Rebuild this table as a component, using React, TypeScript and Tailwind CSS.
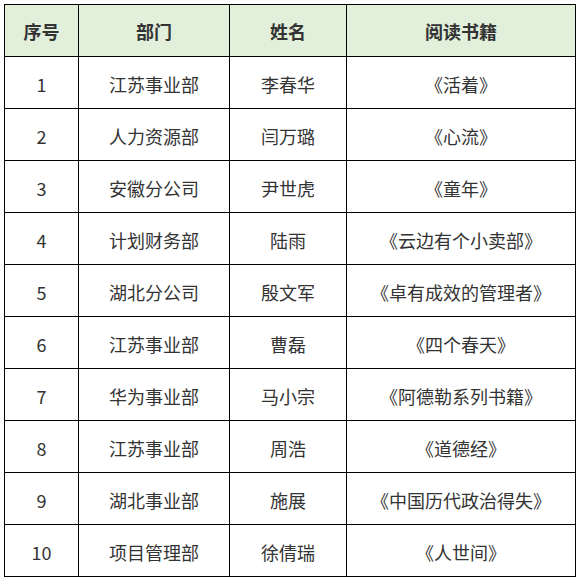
const rows = [
  ['1', '江苏事业部', '李春华', '《活着》'],
  ['2', '人力资源部', '闫万璐', '《心流》'],
  ['3', '安徽分公司', '尹世虎', '《童年》'],
  ['4', '计划财务部', '陆雨', '《云边有个小卖部》'],
  ['5', '湖北分公司', '殷文军', '《卓有成效的管理者》'],
  ['6', '江苏事业部', '曹磊', '《四个春天》'],
  ['7', '华为事业部', '马小宗', '《阿德勒系列书籍》'],
  ['8', '江苏事业部', '周浩', '《道德经》'],
  ['9', '湖北事业部', '施展', '《中国历代政治得失》'],
  ['10', '项目管理部', '徐倩瑞', '《人世间》'],
];

const headers = ['序号', '部门', '姓名', '阅读书籍'];

export default function App() {
  return (
    <div
      className="bg-white p-1 text-[18px] text-[#333333]"
      style={{ fontFamily: '"Noto Sans CJK SC", "Noto Sans", sans-serif' }}
    >
      <table className="w-[572px] table-fixed border-collapse border border-black">
        <colgroup>
          <col className="w-[74px]" />
          <col className="w-[151px]" />
          <col className="w-[117px]" />
          <col className="w-[229px]" />
        </colgroup>
        <thead>
          <tr className="h-[52px] bg-[#e2efda]">
            {headers.map((h) => (
              <th key={h} className="border border-black pt-[2px] text-center font-bold">
                {h}
              </th>
            ))}
          </tr>
        </thead>
        <tbody>
          {rows.map((r) => (
            <tr key={r[0]} className="h-[52px]">
              {r.map((c, i) => (
                <td key={i} className="border border-black pt-[3px] text-center">
                  {c}
                </td>
              ))}
            </tr>
          ))}
        </tbody>
      </table>
    </div>
  );
}
